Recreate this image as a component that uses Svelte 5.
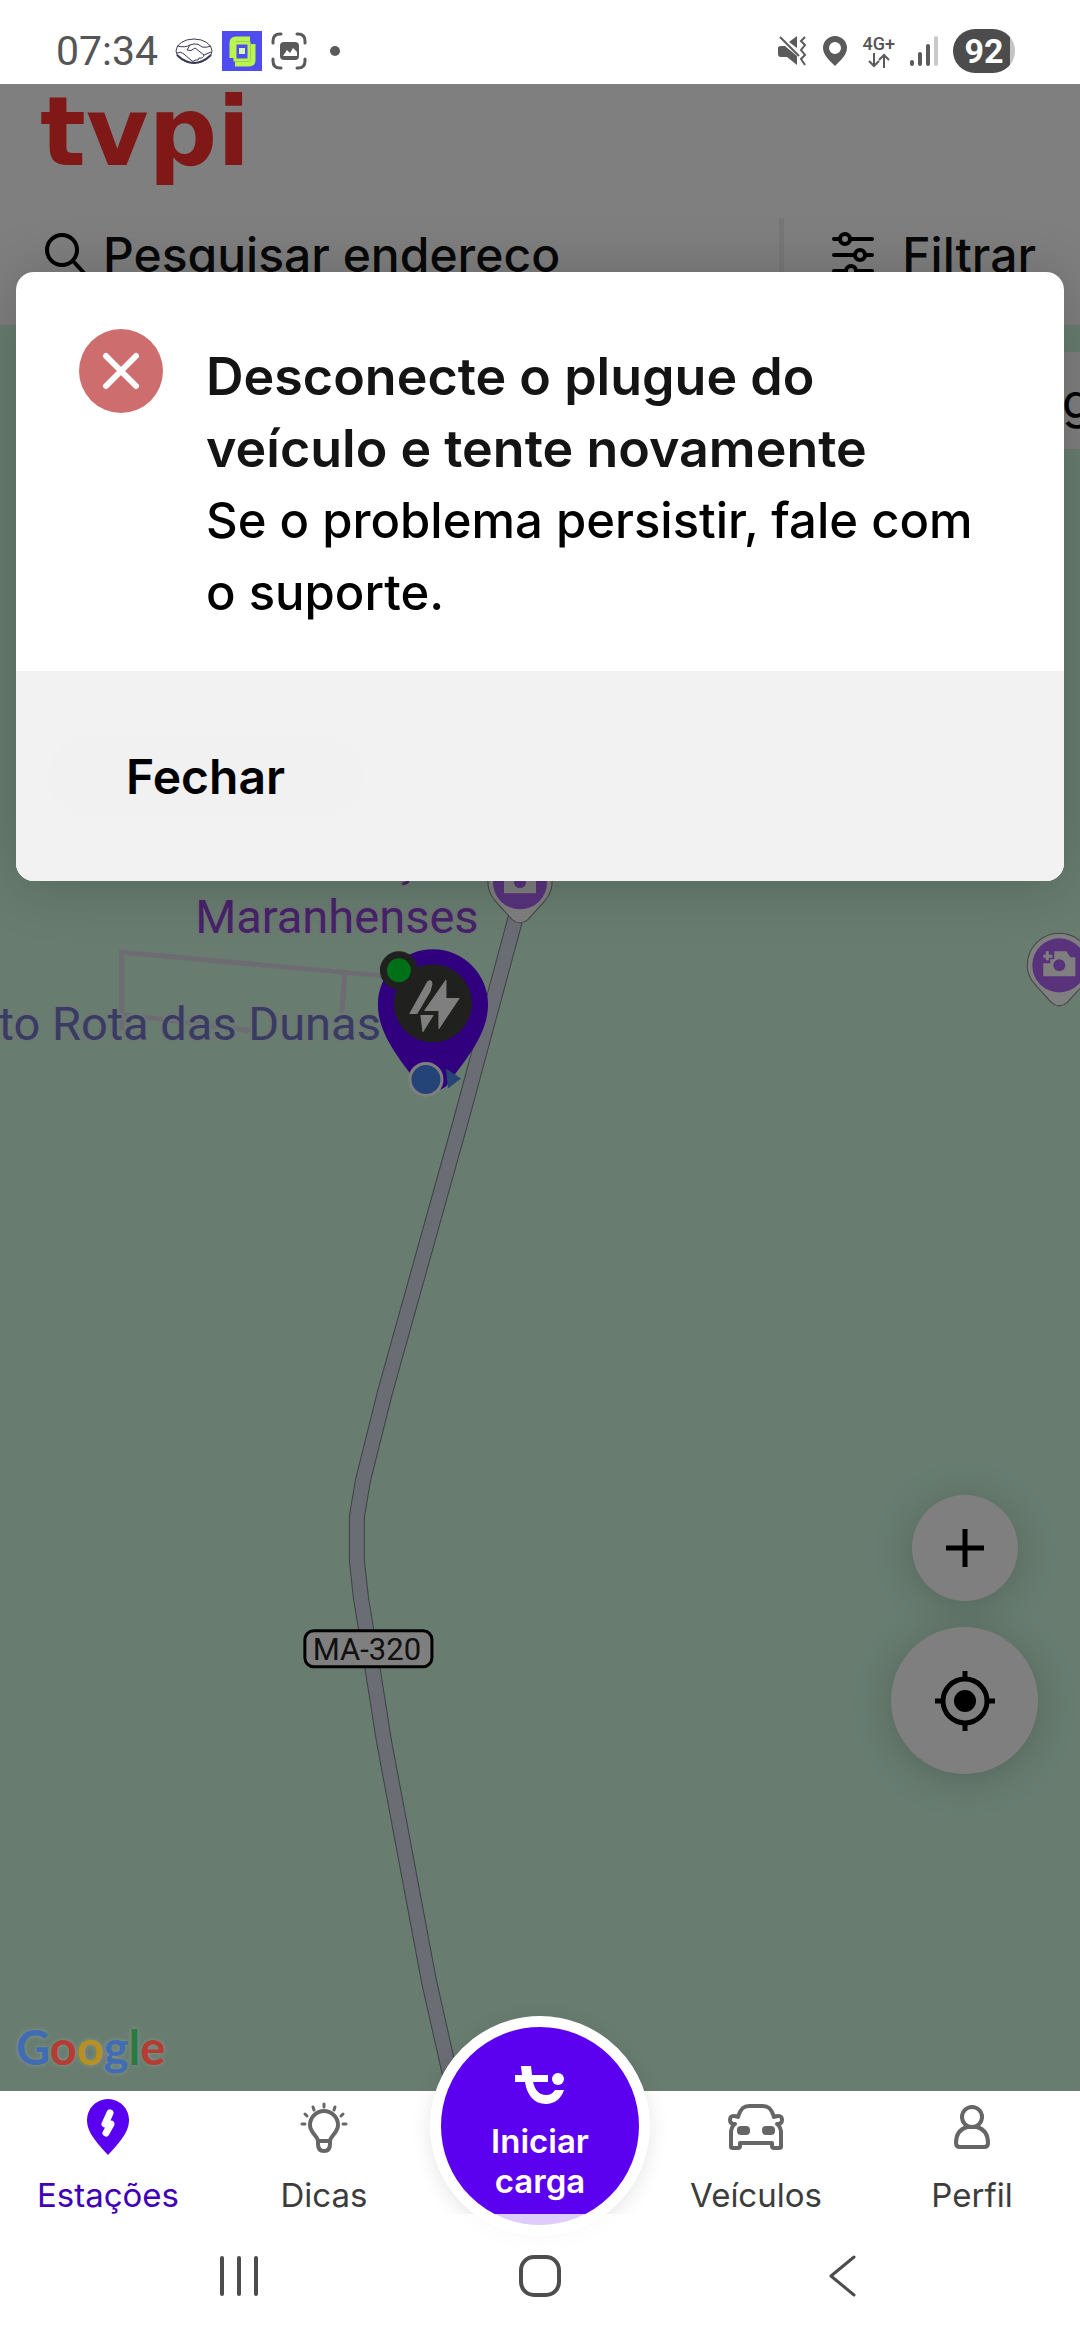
<script lang="ts">
  let open = $state(true);
  let active = $state('estacoes');
  let query = $state('');

  const googleLetters = [
    { char: 'G', tone: 'blue' },
    { char: 'o', tone: 'red' },
    { char: 'o', tone: 'yellow' },
    { char: 'g', tone: 'blue' },
    { char: 'l', tone: 'green' },
    { char: 'e', tone: 'red' }
  ];

  const roadPath =
    'M519 905 L461 1120 L385 1392 L363 1480 L357 1516 L357 1560 L361 1597 L373 1670 L384 1740 L429 1980 L447 2060 L455 2095';
</script>

{#snippet cameraPin(x: number, y: number)}
  <g transform="translate({x} {y})" class="camera-pin">
    <path class="camera-pin-body" d="M0 -32 a32 32 0 0 1 32 32 c0 13 -8 19 -14 26 l-10 11 q-8 7 -16 0 l-10 -11 c-6 -7 -14 -13 -14 -26 a32 32 0 0 1 32 -32z" />
    <circle r="27" fill="#b066f8" />
    <path fill="#fff" d="M-5 -14 h12 l4 6 h5 v19 h-32 v-13 h7 v-4 h4z" />
    <circle r="6" fill="#b066f8" />
    <path d="M-12 -14 v9 M-16 -9 h9" stroke="#fff" stroke-width="3" />
  </g>
{/snippet}

<div class="screen">
  <div class="status-bar">
    <div class="status-group">
      <span class="clock">07:34</span>
      <svg width="38" height="30" viewBox="0 0 38 30" fill="none" stroke="#3a3a55" aria-hidden="true">
        <ellipse cx="19" cy="15" rx="18" ry="12" stroke-width="1" />
        <path d="M2 19 Q19 35 36 19" stroke-width="2" />
        <path d="M2 10 Q10 12 15 9 L19 8 Q23 7 27 11 Q31 12 36 10 M15 9 L12 14 Q16 16 20 12 L29 19 M2 17 Q6 15 9 18 L17 25 Q20 26 20 24 Q24 25 24 22 Q28 23 29 19 L36 16" stroke-width="1" />
      </svg>
      <svg width="40" height="40" viewBox="0 0 40 40" aria-hidden="true">
        <rect width="40" height="40" fill="#4f4cf0" />
        <path d="M10 27 V12 q0 -4 4 -4 h14 M31 13 v16 q0 4 -4 4 H13" fill="none" stroke="#b9f54a" stroke-width="5" />
        <rect x="13" y="12" width="14" height="17" fill="none" stroke="#b9f54a" stroke-width="3" />
        <rect x="17" y="17" width="6" height="6" fill="#d8f5c0" />
      </svg>
      <svg width="36" height="38" viewBox="0 0 36 38" aria-hidden="true">
        <path d="M2 11 V9 q0 -7 7 -7 h1 M26 2 h1 q7 0 7 7 v2 M34 27 v2 q0 7 -7 7 h-1 M10 36 H9 q-7 0 -7 -7 v-2" fill="none" stroke="#5a5a5a" stroke-width="3" stroke-linecap="round" />
        <rect x="9" y="10" width="19" height="18" rx="4" fill="#5a5a5a" />
        <path d="M12 24 l4 -6 3 3 3 -5 4 4 v4z" fill="#fff" />
      </svg>
      <span class="status-dot"></span>
    </div>

    <div class="status-group status-right">
      <svg width="30" height="32" viewBox="0 0 30 32" aria-hidden="true">
        <path d="M1 13 q0 -2 3 -2 h4 L20 21 v9 L10 22 H4 q-3 0 -3 -3z M12 7 L20 1 v12z" fill="#5a5a5a" />
        <path d="M3 2 L22 21" stroke="#5a5a5a" stroke-width="2" />
        <path d="M28 2 l-4 4 4 4 -4 5 4 5 -4 4 4 6" fill="none" stroke="#5a5a5a" stroke-width="2" />
      </svg>
      <svg width="26" height="32" viewBox="0 0 26 32" aria-hidden="true">
        <path fill="#5a5a5a" fill-rule="evenodd" d="M13 1 a12 12 0 0 1 12 12 c0 7 -7 13 -12 18 c-5 -5 -12 -11 -12 -18 a12 12 0 0 1 12 -12z M13 7 a6 6 0 1 0 0 12 a6 6 0 0 0 0 -12z" />
      </svg>
      <div class="network">
        <span>4G+</span>
        <svg width="24" height="15" viewBox="0 0 24 15" fill="none" stroke="#5a5a5a" stroke-width="2" aria-hidden="true">
          <path d="M7 0 V13 M2 8 L7 13 L12 8 M17 15 V2 M12 7 L17 2 L22 7" />
        </svg>
      </div>
      <svg width="28" height="30" viewBox="0 0 28 30" stroke-width="4" stroke-linecap="round" aria-hidden="true">
        <path d="M2 26 V28 M10 18 V28 M18 10 V28" stroke="#5a5a5a" />
        <path d="M26 2 V28" stroke="#c9c9c9" />
      </svg>
      <span class="battery">92</span>
    </div>
  </div>

  <main class="content">
    <header class="app-header">
      <div class="brand">tvpi</div>
      <div class="search-row">
        <label class="search">
          <svg width="42" height="44" viewBox="0 0 42 44" fill="none" stroke="#000" stroke-width="4" stroke-linecap="round" aria-hidden="true">
            <circle cx="17" cy="18" r="15" />
            <path d="M28 29 L39 41" />
          </svg>
          <input type="text" placeholder="Pesquisar endereço" aria-label="Pesquisar endereço" bind:value={query} />
        </label>
        <button type="button" class="filter">
          <svg width="42" height="44" viewBox="0 0 42 44" fill="none" stroke="#000" stroke-width="4" stroke-linecap="round" aria-hidden="true">
            <path d="M2 7 H8 M18 7 H40 M2 23 H23 M33 23 H40 M2 39 H14 M24 39 H40" />
            <circle cx="13" cy="7" r="5" />
            <circle cx="28" cy="23" r="5" />
            <circle cx="19" cy="39" r="5" />
          </svg>
          Filtrar
        </button>
      </div>
    </header>

    <section class="map" aria-label="Mapa">
      <svg class="map-canvas" viewBox="0 325 1080 1765" preserveAspectRatio="xMidYMid slice">
        <g fill="none" stroke="#dcd6e6" stroke-width="5">
          <path d="M122 1030 V952 L390 976 M345 974 L342 1012 M122 1014 L250 1030" />
        </g>
        <path d={roadPath} fill="none" stroke="#7c808c" stroke-width="16" stroke-linejoin="round" />
        <path d={roadPath} fill="none" stroke="#d4dae6" stroke-width="14" stroke-linejoin="round" />

        <g class="place-label">
          <text x="392" y="876" fill="#8c46d2">ç</text>
          <text x="337" y="933" text-anchor="middle" fill="#8c46d2">Maranhenses</text>
          <text x="381" y="1040" text-anchor="end" fill="#7076c4">to Rota das Dunas</text>
        </g>

        <rect x="305" y="1630" width="127" height="36" rx="9" fill="#fff" stroke="#000" stroke-width="3" />
        <text class="road-label" x="367" y="1659" text-anchor="middle">MA-320</text>

        {@render cameraPin(520, 882)}
        {@render cameraPin(1059, 965)}

        <!-- charging station -->
        <path d="M433 949 a55 55 0 0 1 55 55 c0 30 -22 55 -42 82 q-13 9 -26 0 c-20 -27 -42 -52 -42 -82 a55 55 0 0 1 55 -55z" fill="#6000ff" />
        <circle cx="433" cy="1003" r="39" fill="#40403c" />
        <path d="M428 981 q4 -2 4 3 l-2 7 -13 22 h-7z M446 980 v18 h13 l-20 30 v-18 h-14z M421 1015 h12 l-10 16z" fill="#fff" stroke="#fff" stroke-width="1" stroke-linejoin="round" />
        <circle cx="399" cy="970" r="19" fill="#40403c" />
        <circle cx="399" cy="970" r="12" fill="#00e030" />
        <path d="M446 1068 L461 1078 L448 1088z" fill="#4888e8" />
        <circle cx="426" cy="1079" r="16" fill="#4888f0" stroke="#fff" stroke-width="3" />
      </svg>

      <button type="button" class="chip" aria-label="Filtro rápido">g</button>

      <div class="controls">
        <button type="button" class="round small" aria-label="Aproximar">
          <svg width="40" height="40" viewBox="0 0 40 40" stroke="#000" stroke-width="5" aria-hidden="true">
            <path d="M20 1 V39 M1 20 H39" />
          </svg>
        </button>
        <button type="button" class="round" aria-label="Minha localização">
          <svg width="60" height="60" viewBox="0 0 60 60" fill="none" stroke="#000" stroke-width="5" aria-hidden="true">
            <circle cx="30" cy="30" r="22" />
            <circle cx="30" cy="30" r="11" fill="#000" stroke="none" />
            <path d="M30 0 V8 M30 52 V60 M0 30 H8 M52 30 H60" />
          </svg>
        </button>
      </div>

      <div class="google">
        {#each googleLetters as letter}<span class={letter.tone}>{letter.char}</span>{/each}
      </div>
    </section>

    {#if open}
      <div class="backdrop"></div>
      <div class="dialog" role="alertdialog" aria-labelledby="dialog-title" aria-describedby="dialog-text">
        <div class="dialog-body">
          <svg class="dialog-icon" width="84" height="84" viewBox="0 0 84 84" aria-hidden="true">
            <circle cx="42" cy="42" r="42" fill="#cd6d6e" />
            <path d="M27 27 L57 57 M57 27 L27 57" stroke="#fff" stroke-width="6" stroke-linecap="round" />
          </svg>
          <div class="dialog-copy">
            <h1 id="dialog-title">Desconecte o plugue do veículo e tente novamente</h1>
            <p id="dialog-text">Se o problema persistir, fale com o suporte.</p>
          </div>
        </div>
        <div class="dialog-footer">
          <button type="button" class="close" onclick={() => (open = false)}>Fechar</button>
        </div>
      </div>
    {/if}
  </main>

  <nav class="tabs">
    <button type="button" class="tab" class:active={active === 'estacoes'} onclick={() => (active = 'estacoes')}>
      <svg width="56" height="56" viewBox="0 0 56 56" aria-hidden="true">
        <path d="M28 0 a21 21 0 0 1 21 22 c0 12 -12 24 -21 34 c-9 -10 -21 -22 -21 -34 a21 21 0 0 1 21 -22z" fill="#5a00f0" />
        <path d="M30 14 L25 25 H31 L26 34" fill="none" stroke="#fff" stroke-width="7" stroke-linecap="round" stroke-linejoin="round" />
      </svg>
      Estações
    </button>
    <button type="button" class="tab" class:active={active === 'dicas'} onclick={() => (active = 'dicas')}>
      <svg width="56" height="56" viewBox="0 0 56 56" fill="none" stroke="#666" stroke-width="4" stroke-linecap="round" aria-hidden="true">
        <path d="M22 42 c0 -5 -8 -8 -8 -16 a14 14 0 0 1 28 0 c0 8 -8 11 -8 16z M22 42 v3 q0 7 6 7 t6 -7 v-3" />
        <path d="M28 5 v3 M17 8 l1 3 M39 8 l-1 3 M9 15 l2 2 M47 15 l-2 2 M6 25 h3 M47 25 h3" stroke-width="3" />
      </svg>
      Dicas
    </button>
    <div class="start-slot">
      <button type="button" class="start">
        <svg width="50" height="40" viewBox="0 0 50 40" aria-hidden="true">
          <path d="M6 1 h10 l1 9 h16 v7 H18 c2 8 6 13 13 13 q6 0 9 -5 h9 c-3 9 -10 14 -18 14 c-12 0 -19 -9 -21 -22 H0 v-7 h7z" fill="#fff" />
          <circle cx="43" cy="14" r="6" fill="#fff" />
        </svg>
        Iniciar<br />carga
      </button>
    </div>
    <button type="button" class="tab" class:active={active === 'veiculos'} onclick={() => (active = 'veiculos')}>
      <svg width="56" height="56" viewBox="0 0 56 56" fill="none" stroke="#666" stroke-width="4" stroke-linejoin="round" aria-hidden="true">
        <path d="M10 18 C13 9 16 7 21 7 H35 C40 7 43 9 46 18 Q54 15 54 21 Q54 25 49 25 Q53 28 53 34 V48 Q53 49 51 49 H46 Q44 49 44 47 V44 H12 V47 Q12 49 10 49 H5 Q3 49 3 48 V34 Q3 28 7 25 Q2 25 2 21 Q2 15 10 18z" />
        <rect x="9" y="27" width="13" height="9" rx="4" fill="#666" stroke="none" />
        <rect x="34" y="27" width="13" height="9" rx="4" fill="#666" stroke="none" />
      </svg>
      Veículos
    </button>
    <button type="button" class="tab" class:active={active === 'perfil'} onclick={() => (active = 'perfil')}>
      <svg width="56" height="56" viewBox="0 0 56 56" fill="none" stroke="#666" stroke-width="4" aria-hidden="true">
        <circle cx="28" cy="18" r="10" />
        <path d="M23 28 H33 C40 30 44 35 44 44 Q44 48 40 48 H16 Q12 48 12 44 C12 35 16 30 23 28z" />
      </svg>
      Perfil
    </button>
  </nav>

  <div class="system-bar">
    <button type="button" aria-label="Recentes">
      <svg width="42" height="42" viewBox="0 0 42 42" fill="none" stroke="#4d4d4d" stroke-width="4" stroke-linecap="round">
        <path d="M4 3 V39 M21 3 V39 M38 3 V39" />
      </svg>
    </button>
    <button type="button" aria-label="Início">
      <svg width="42" height="42" viewBox="0 0 42 42" fill="none" stroke="#4d4d4d" stroke-width="4">
        <rect x="2" y="2" width="38" height="38" rx="13" />
      </svg>
    </button>
    <button type="button" aria-label="Voltar">
      <svg width="42" height="42" viewBox="0 0 42 42" fill="none" stroke="#4d4d4d" stroke-width="3" stroke-linecap="round" stroke-linejoin="round">
        <path d="M34 2 L11 21 L34 40" />
      </svg>
    </button>
  </div>
</div>

<style>
  :global(body) {
    margin: 0;
    background: #fff;
  }

  .screen {
    display: flex;
    flex-direction: column;
    min-height: 100vh;
    font-family: Inter, Roboto, sans-serif;
    color: #000;
    overflow: hidden;
  }

  button,
  input {
    padding: 0;
    border: none;
    background: none;
    font: inherit;
    color: inherit;
  }

  svg {
    display: block;
    flex-shrink: 0;
  }

  /* status bar */
  .status-bar {
    display: flex;
    align-items: center;
    justify-content: space-between;
    box-sizing: border-box;
    height: 84px;
    padding: 18px 65px 0 56px;
    background: #fff;
    color: #555;
    font-family: Roboto, sans-serif;
  }

  .status-group {
    display: flex;
    align-items: center;
    gap: 9px;
  }

  .status-right {
    gap: 15px;
  }

  .clock {
    margin-right: 8px;
    font-size: 41px;
    line-height: 40px;
  }

  .status-dot {
    width: 10px;
    height: 10px;
    margin-left: 14px;
    border-radius: 50%;
    background: #5a5a5a;
  }

  .network {
    display: flex;
    flex-direction: column;
    align-items: center;
    font-size: 18px;
    font-weight: 500;
    line-height: 18px;
  }

  .battery {
    box-sizing: border-box;
    width: 62px;
    height: 44px;
    border-radius: 22px;
    background: linear-gradient(90deg, #4c4c4c 92%, #c4c4c4 92%);
    color: #fff;
    font-size: 34px;
    font-weight: 700;
    line-height: 44px;
    text-align: center;
  }

  /* page */
  .content {
    position: relative;
    display: flex;
    flex: 1;
    flex-direction: column;
  }

  .app-header {
    display: flex;
    flex-direction: column;
    height: 241px;
    background: #fff;
  }

  .brand {
    height: 134px;
    padding-left: 40px;
    color: #ff302c;
    font-family: "DejaVu Sans", sans-serif;
    font-size: 96px;
    font-weight: 700;
    line-height: 96px;
  }

  .search-row {
    display: flex;
    height: 72px;
    font-size: 48px;
    font-weight: 500;
  }

  .search {
    display: flex;
    flex: 1;
    align-items: center;
    gap: 16px;
    min-width: 0;
    padding-left: 45px;
    border-right: 5px solid #eee;
  }

  .search input {
    flex: 1;
    min-width: 0;
    outline: none;
  }

  .search input::placeholder {
    color: #111;
    opacity: 1;
  }

  .filter {
    display: flex;
    align-items: center;
    gap: 28px;
    padding: 0 44px 0 48px;
    color: #111;
  }

  .map {
    position: relative;
    flex: 1;
    background: #d0fae1;
  }

  .map-canvas {
    position: absolute;
    inset: 0;
    width: 100%;
    height: 100%;
  }

  .place-label {
    font-family: Roboto, sans-serif;
    font-size: 47px;
    paint-order: stroke;
    stroke: #dceee4;
    stroke-width: 4px;
  }

  .road-label {
    font-family: Roboto, sans-serif;
    font-size: 31px;
    fill: #222;
  }

  .camera-pin-body {
    fill: #fff;
    stroke: #888;
    stroke-width: 1px;
  }

  .chip {
    position: absolute;
    top: 27px;
    right: 0;
    width: 40px;
    height: 97px;
    padding-left: 22px;
    border-radius: 16px 0 0 16px;
    background: #fff;
    font-size: 48px;
    text-align: left;
    overflow: hidden;
  }

  .controls {
    position: absolute;
    right: 42px;
    bottom: 317px;
    display: flex;
    flex-direction: column;
    align-items: center;
    gap: 26px;
  }

  .round {
    display: grid;
    place-items: center;
    width: 147px;
    height: 147px;
    border-radius: 50%;
    background: #fff;
    box-shadow: 0 4px 40px rgba(0, 0, 0, 0.2);
  }

  .round.small {
    width: 106px;
    height: 106px;
  }

  /* the attribution stays above the backdrop */
  .google {
    position: absolute;
    z-index: 1;
    left: 16px;
    bottom: 16px;
    font-family: Lato, sans-serif;
    font-size: 47px;
    font-weight: 700;
    line-height: 56px;
    text-shadow: 0 0 4px #8c968f;
  }

  .blue {
    color: #406cb4;
  }

  .red {
    color: #b43c32;
  }

  .yellow {
    color: #b89020;
  }

  .green {
    color: #2a7a42;
  }

  .backdrop {
    position: absolute;
    inset: 0;
    background: rgba(0, 0, 0, 0.5);
  }

  /* dialog */
  .dialog {
    position: absolute;
    top: 188px;
    left: 16px;
    right: 16px;
    border-radius: 18px;
    background: #fff;
    box-shadow: 0 4px 60px rgba(0, 0, 0, 0.2);
    overflow: hidden;
  }

  .dialog-body {
    display: flex;
    gap: 43px;
    padding: 57px 63px 42px;
  }

  .dialog-copy {
    padding-top: 12px;
    font-size: 49px;
    line-height: 72px;
  }

  h1 {
    margin: 0;
    color: #141414;
    font-size: 52px;
    font-weight: 600;
    line-height: 72px;
  }

  p {
    margin: 0;
    font-weight: 500;
  }

  .dialog-footer {
    padding: 64px 32px;
    background: #f2f2f2;
  }

  .close {
    height: 82px;
    padding: 0 78px;
    border-radius: 41px;
    background: #f1f1f1;
    font-size: 48px;
    font-weight: 600;
  }

  /* bottom navigation */
  .tabs {
    display: grid;
    grid-template-columns: repeat(5, 1fr);
    height: 123px;
    background: #fff;
    color: #3c3c3c;
    font-size: 33px;
    line-height: 40px;
  }

  .tab {
    display: flex;
    flex-direction: column;
    align-items: center;
    gap: 20px;
    padding-top: 8px;
  }

  .tab.active {
    color: #3f00b8;
  }

  .start-slot {
    position: relative;
  }

  .start {
    position: absolute;
    top: -75px;
    left: 50%;
    display: flex;
    flex-direction: column;
    align-items: center;
    box-sizing: border-box;
    width: 220px;
    height: 220px;
    margin-left: -110px;
    padding-top: 38px;
    border: 11px solid #fff;
    border-radius: 50%;
    background: #5c00f0;
    box-shadow: 0 4px 20px rgba(0, 0, 0, 0.1);
    color: #fff;
    font-weight: 600;
  }

  .start svg {
    margin-bottom: 16px;
  }

  .system-bar {
    position: relative;
    display: grid;
    grid-template-columns: repeat(3, 1fr);
    height: 126px;
    padding: 0 88px;
    background: rgba(255, 255, 255, 0.8);
  }

  .system-bar button {
    display: flex;
    justify-content: center;
    padding-top: 41px;
  }
</style>
